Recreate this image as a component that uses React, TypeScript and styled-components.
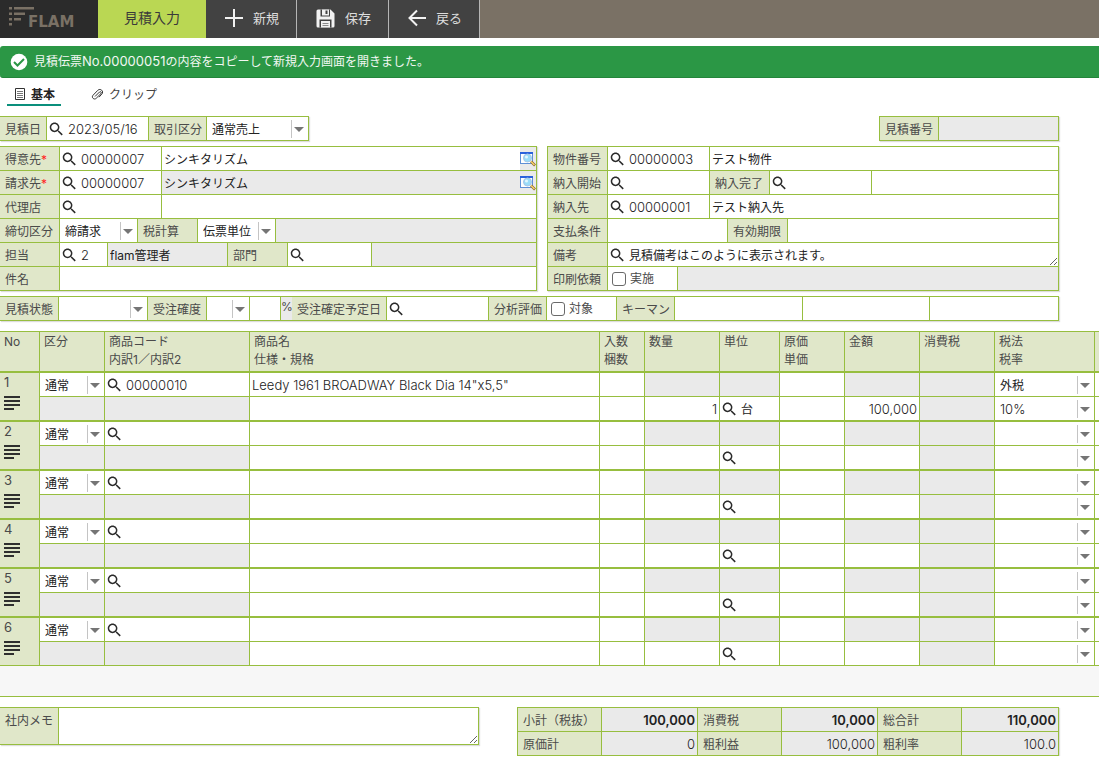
import React from "react";
import styled, { createGlobalStyle, css } from "styled-components";

const line = "#97be3f";
const labelBg = "#e0e7c9";
const readBg = "#eaeaea";
const latin = '"Inter", "Noto Sans CJK JP", sans-serif';

const Global = createGlobalStyle`
  *, *::before, *::after { box-sizing: border-box; }
  body {
    margin: 0;
    background: #fff;
    color: #4a4a4a;
    font-family: ${latin};
    font-size: 12px;
    font-weight: 400;
    line-height: 18px;
  }
  button, input, select, textarea { font: inherit; color: #222; margin: 0; border-radius: 0; }
`;

/* ---------- header ---------- */
const TopBar = styled.header`
  display: flex;
  height: 38px;
  background: #7a7165;
`;
const Logo = styled.a`
  display: flex;
  width: 98px;
  padding: 6px 0 0 8px;
  background: #2b2b2b;
  color: #7a7165;
  text-decoration: none;
`;
const LogoName = styled.span`
  margin: 7px 0 0 -8px;
  font: bold 15px/18px "DejaVu Sans", sans-serif;
`;
const CurrentPage = styled.h1`
  margin: 0;
  width: 108px;
  background: #bad753;
  color: #3a3a3a;
  font-size: 14px;
  font-weight: 400;
  line-height: 36px;
  text-align: center;
`;
const ToolButton = styled.button`
  display: flex;
  align-items: center;
  gap: 10px;
  padding: 0 17px 2px 19px;
  border: 0;
  border-right: 1px solid #b5b5b5;
  background: #424242;
  color: #ddd;
  font-size: 13px;
  cursor: pointer;
`;
const Notice = styled.div`
  display: flex;
  align-items: center;
  gap: 6px;
  height: 32px;
  margin-top: 8px;
  padding-left: 10px;
  border-bottom: 1px solid #24853b;
  border-radius: 3px 0 0 3px;
  background: #2b9745;
  color: #f2f8f3;
`;
const Num = styled.span`
  font-size: 13px;
`;

const Tabs = styled.nav`
  display: flex;
  gap: 23px;
  padding: 5px 0 0 7px;
`;
const Tab = styled.a<{ $active?: boolean }>`
  display: flex;
  align-items: center;
  gap: 5px;
  height: 23px;
  padding: 2px 6px 0 7px;
  border-bottom: 2px solid ${(p) => (p.$active ? "#0a8f7c" : "transparent")};
  color: ${(p) => (p.$active ? "#222" : "#444")};
  font-weight: ${(p) => (p.$active ? 700 : 400)};
  text-decoration: none;
`;

/* ---------- form ---------- */
const Form = styled.form`
  margin: 0;
`;
const Section = styled.div`
  display: flex;
  justify-content: space-between;
  margin-top: 5px;
  padding-right: 40px;
`;
const FirstSection = styled(Section)`
  margin-top: 10px;
`;
const Halves = styled(Section)`
  display: grid;
  grid-template-columns: 537fr 512fr;
  gap: 10px;
`;
const BottomSection = styled(Section)`
  display: grid;
  grid-template-columns: 479fr 542fr;
  align-items: start;
  gap: 38px;
  margin-top: 10px;
`;
const Panel = styled.div<{ $edge?: boolean; $grow?: boolean }>`
  min-width: 0;
  flex: ${(p) => (p.$grow ? 1 : "none")};
  border: 1px solid ${line};
  border-left-width: ${(p) => (p.$edge ? 0 : 1)}px;
  box-shadow: 1px 1px 1px #ddd;
`;
const Row = styled.div<{ $cols: string }>`
  display: grid;
  grid-template-columns: ${(p) => p.$cols};
  grid-template-rows: 23px;
  & + & {
    border-top: 1px solid ${line};
  }
  & > * + * {
    border-left: 1px solid ${line};
  }
`;
const Label = styled.label`
  padding: 1px 5px 0;
  background: ${labelBg};
  line-height: 23px;
  white-space: nowrap;
  overflow: hidden;
`;
const Required = styled.span`
  color: #f22;
`;
const Cell = styled.div<{ $read?: boolean }>`
  display: flex;
  align-items: center;
  min-width: 0;
  background: ${(p) => (p.$read ? readBg : "#fff")};
`;
const Input = styled.input<{ $num?: boolean; $right?: boolean; $strong?: boolean }>`
  flex: 1;
  width: 100%;
  min-width: 0;
  height: 23px;
  padding: 0 2px;
  border: 0;
  background: transparent;
  outline: 0;
  font-size: ${(p) => (p.$num ? 13 : 12)}px;
  font-weight: ${(p) => (p.$strong ? 600 : p.$num ? 300 : 400)};
  text-align: ${(p) => (p.$right ? "right" : "left")};
`;
const IconButton = styled.button`
  display: flex;
  flex: none;
  padding: 0 3px 0 2px;
  border: 0;
  background: transparent;
  cursor: pointer;
`;
const DetailButton = styled.button`
  display: flex;
  align-items: center;
  height: 23px;
  padding: 0;
  border: 0;
  background: ${readBg};
  cursor: pointer;
`;
const SelectBox = styled.div`
  position: relative;
  flex: 1;
  min-width: 0;
  &::before {
    content: "";
    position: absolute;
    top: 3px;
    right: 16px;
    height: 18px;
    border-left: 1px solid #c4c4c4;
  }
  &::after {
    content: "";
    position: absolute;
    top: 10px;
    right: 4px;
    border: 5px solid transparent;
    border-top-color: #757575;
    border-bottom: 0;
    pointer-events: none;
  }
`;
const SelectInput = styled.select<{ $num?: boolean }>`
  display: block;
  width: 100%;
  height: 23px;
  padding: ${(p) => (p.$num ? 1 : 2)}px 18px 0 5px;
  border: 0;
  background: transparent;
  appearance: none;
  outline: 0;
  font-size: ${(p) => (p.$num ? 13 : 12)}px;
  font-weight: ${(p) => (p.$num ? 300 : 400)};
`;
const Check = styled.label`
  display: flex;
  align-items: center;
  gap: 4px;
  padding: 1px 0 0 4px;
  background: #fff;
`;
const CheckBox = styled.input`
  appearance: none;
  width: 14px;
  height: 14px;
  border: 1px solid #6a6a6a;
  border-radius: 3px;
  background: #fff;
`;
const areaStyle = css`
  flex: 1;
  min-width: 0;
  border: 0;
  outline: 0;
  background: transparent;
  overflow: hidden;
  display: block;
`;
const Remarks = styled.textarea`
  ${areaStyle}
  height: 23px;
  padding: 4px 2px 0;
`;
const Memo = styled.textarea`
  ${areaStyle}
  height: 36px;
  padding: 2px;
`;
const MemoRow = styled.div`
  display: grid;
  grid-template-columns: 58px 1fr;
  & > * + * {
    border-left: 1px solid ${line};
  }
`;
const PercentGroup = styled.div`
  display: grid;
  grid-template-columns: 11px 1fr;
  grid-template-rows: 23px;
  background: ${readBg};
`;
const Percent = styled.span`
  line-height: 20px;
`;

/* ---------- detail lines ---------- */
const Lines = styled.div`
  margin-top: 10px;
  padding-bottom: 30px;
  border-bottom: 1px solid ${line};
  background: #f7f7f7;
  overflow: hidden;
`;
const LineTable = styled.table`
  width: 100%;
  table-layout: fixed;
  border-collapse: separate;
  border-spacing: 0;
  border-top: 1px solid ${line};
  background: #fff;
`;
const Col = styled.col<{ $w?: number }>`
  width: ${(p) => (p.$w ? `${p.$w}px` : "auto")};
`;
const Th = styled.th`
  height: 41px;
  padding: 1px 4px 0;
  border-right: 1px solid ${line};
  border-bottom: 2px solid ${line};
  background: ${labelBg};
  font-weight: 400;
  text-align: left;
  vertical-align: top;
  white-space: nowrap;
  &:last-child { border-right: 0; padding: 0; }
`;
const Td = styled.td<{ $read?: boolean; $end?: number }>`
  height: ${(p) => 23 + (p.$end ?? 1)}px;
  padding: 0;
  border-right: 1px solid ${line};
  border-bottom: ${(p) => p.$end ?? 1}px solid ${line};
  background: ${(p) => (p.$read ? readBg : "#fff")};
  &:last-child { border-right: 0; }
`;
const NoCell = styled.th<{ $end: number }>`
  padding: 0 4px;
  border-right: 1px solid ${line};
  border-bottom: ${(p) => p.$end}px solid ${line};
  background: ${labelBg};
  font-size: 13px;
  font-weight: 400;
  text-align: left;
  vertical-align: top;
`;
const MenuButton = styled.button`
  display: block;
  margin-top: 5px;
  padding: 0;
  border: 0;
  background: transparent;
`;

/* ---------- icons ---------- */
const SearchIcon = () => (
  <svg width="14" height="14" viewBox="2 2.400 18.800 18.800" fill="#2b2b2b">
    <path d="M15.5 14h-.79l-.28-.27C15.41 12.59 16 11.11 16 9.5 16 5.91 13.09 3 9.5 3S3 5.91 3 9.5 5.91 16 9.5 16c1.61 0 3.09-.59 4.23-1.57l.27.28v.79l5 4.99L20.49 19l-4.99-5zm-6 0C7.01 14 5 11.99 5 9.5S7.01 5 9.5 5 14 7.01 14 9.5 11.99 14 9.5 14z" />
  </svg>
);
const WindowIcon = () => (
  <svg width="16" height="16" viewBox="0 0 16 16">
    <rect x="0.5" y="1.5" width="12" height="11" fill="#fff" stroke="#5f8fd6" />
    <rect x="0" y="1" width="13" height="2" fill="#2a62dc" />
    <circle cx="7.5" cy="7" r="4" fill="#9adcf8" stroke="#a9c6e6" />
    <circle cx="6.5" cy="6" r="1.5" fill="#e4f8ff" />
    <path d="M11 10.500l4 4" stroke="#8d6a2c" strokeWidth="2.600" />
    <path d="M11 10.500l3.500 3.500" stroke="#f6cf6c" strokeWidth="1.500" />
  </svg>
);
const LinesIcon = () => (
  <svg width="16" height="14" viewBox="0 0 16 14" fill="#2f2f2f">
    <path d="M0 0h16v2H0zM0 4h16v2H0zM0 8h16v2H0zM0 12h10v2H0z" />
  </svg>
);
const PlusIcon = () => (
  <svg width="18" height="18" viewBox="0 0 18 18" fill="#f2f2f2">
    <path d="M8 0h2v8h8v2h-8v8H8v-8H0V8h8z" />
  </svg>
);
const SaveIcon = () => (
  <svg width="19" height="19" viewBox="0 0 19 19">
    <path d="M2 .5h12.500l4 4V17a1.500 1.500 0 0 1-1.500 1.500H2A1.500 1.500 0 0 1 .5 17V2A1.500 1.500 0 0 1 2 .5z" fill="#f2f2f2" />
    <path d="M4.500 .5h9.500V7.500H4.500zM3.500 10.500h12v8h-12z" fill="#424242" />
    <path d="M6 .5h7V6.500H6zM5 12h9v6.500H5z" fill="#f2f2f2" />
    <path d="M9.500 1.500h2V5h-2z" fill="#424242" />
    <path d="M6.500 14h6v1h-6zM6.500 16h6v1h-6z" fill="#8a8a8a" />
  </svg>
);
const BackIcon = () => (
  <svg width="18" height="18" viewBox="0 0 18 18" fill="none" stroke="#f2f2f2" strokeWidth="2">
    <path d="M18 9H1.500M9 1.500L1.500 9 9 16.500" />
  </svg>
);
const OkIcon = () => (
  <svg width="18" height="18" viewBox="0 0 18 18">
    <circle cx="9" cy="9" r="8.300" fill="#fff" />
    <path d="M4 9l3.500 3.500 6.500-6.500" fill="none" stroke="#2b9745" strokeWidth="2" />
  </svg>
);
const DocIcon = () => (
  <svg width="12" height="13" viewBox="0 0 12 13" fill="none" stroke="#333">
    <path d="M1.500 .5h9v11h-9z" />
    <path d="M3 3.500h6M3 5.500h6M3 7.500h6M3 9.500h6" stroke="#777" />
  </svg>
);
const ClipIcon = () => (
  <svg width="13" height="13" viewBox="0 0 13 13" fill="none" stroke="#333">
    <path d="M4 8.500l4.500-4.500c1-1 2.500.4 1.500 1.500L5.200 10.300c-2 2-5.200-.8-3.200-3L6.800 2.300c2.500-2.500 6.500 1 4 3.800L8 9.200" />
  </svg>
);
const LogoMark = () => (
  <svg width="28" height="20" viewBox="0 0 28 20" fill="#7a7165">
    <path d="M1 1h3v2.500H1zM6 1h20v2.500H6zM1 6.500h3V9H1zM6 6.500h11V9H6zM1 12h3v2.500H1zM6 12h7v2.500H6zM1 17h3v2.500H1z" />
  </svg>
);

/* ---------- building blocks ---------- */
type LookupProps = { id?: string; name?: string; value?: string; num?: boolean };
const Lookup = ({ id, name, value = "", num = true }: LookupProps) => (
  <Cell>
    <IconButton type="button" aria-label="検索"><SearchIcon /></IconButton>
    <Input id={id} aria-label={name} $num={num} defaultValue={value} />
  </Cell>
);
const Text = ({ id, name, value = "", read }: { id?: string; name?: string; value?: string; read?: boolean }) => (
  <Cell $read={read}><Input id={id} aria-label={name} readOnly={read} defaultValue={value} /></Cell>
);
const Select = ({ id, name, value = "", num }: { id?: string; name?: string; value?: string; num?: boolean }) => (
  <Cell>
    <SelectBox>
      <SelectInput id={id} aria-label={name} $num={num} defaultValue={value}>
        <option>{value}</option>
      </SelectInput>
    </SelectBox>
  </Cell>
);
const Company = ({ name, read }: { name: string; read?: boolean }) => (
  <Cell $read={read}>
    <Input aria-label={name} readOnly={read} defaultValue="シンキタリズム" />
    <DetailButton type="button" aria-label="詳細"><WindowIcon /></DetailButton>
  </Cell>
);
const Total = ({ id, value, strong }: { id: string; value: string; strong?: boolean }) => (
  <Cell $read><Input id={id} readOnly $num $right $strong={strong} defaultValue={value} /></Cell>
);

const widths = [40, 65, 145, 0, 45, 75, 60, 65, 75, 75, 100, 4];
const totalCols = "83px 96fr 84px 96fr 84px 97fr";

type Item = { code: string; name: string; qty: string; unit: string; amount: string; tax: string; rate: string };
const blank: Item = { code: "", name: "", qty: "", unit: "", amount: "", tax: "", rate: "" };
const items: Item[] = [
  { code: "00000010", name: 'Leedy 1961 BROADWAY Black Dia 14"x5,5"', qty: "1", unit: "台", amount: "100,000", tax: "外税", rate: "10%" },
  blank, blank, blank, blank, blank,
];

const ItemRows = ({ item, no, end }: { item: Item; no: number; end: number }) => (
  <>
    <tr>
      <NoCell rowSpan={2} $end={end}>
        {no}
        <MenuButton type="button" aria-label="行メニュー"><LinesIcon /></MenuButton>
      </NoCell>
      <Td><Select name="区分" value="通常" /></Td>
      <Td><Lookup name="商品コード" value={item.code} /></Td>
      <Td><Input aria-label="商品名" $num defaultValue={item.name} /></Td>
      <Td><Input aria-label="入数" /></Td>
      <Td $read />
      <Td $read />
      <Td><Input aria-label="原価" /></Td>
      <Td $read />
      <Td $read />
      <Td><Select name="税法" value={item.tax} /></Td>
      <Td />
    </tr>
    <tr>
      <Td $read $end={end} />
      <Td $read $end={end} />
      <Td $end={end}><Input aria-label="仕様・規格" /></Td>
      <Td $end={end}><Input aria-label="梱数" /></Td>
      <Td $end={end}><Input aria-label="数量" $num $right defaultValue={item.qty} /></Td>
      <Td $end={end}><Lookup name="単位" num={false} value={item.unit} /></Td>
      <Td $end={end}><Input aria-label="単価" /></Td>
      <Td $end={end}><Input aria-label="金額" $num $right defaultValue={item.amount} /></Td>
      <Td $read $end={end} />
      <Td $end={end}><Select name="税率" num value={item.rate} /></Td>
      <Td $end={end} />
    </tr>
  </>
);

export default function App() {
  return (
    <>
      <Global />
      <TopBar>
        <Logo href="#">
          <LogoMark />
          <LogoName>FLAM</LogoName>
        </Logo>
        <CurrentPage>見積入力</CurrentPage>
        <ToolButton type="button"><PlusIcon />新規</ToolButton>
        <ToolButton type="button"><SaveIcon />保存</ToolButton>
        <ToolButton type="button"><BackIcon />戻る</ToolButton>
      </TopBar>
      <Notice role="status">
        <OkIcon />
        <span>見積伝票<Num>No.00000051</Num>の内容をコピーして新規入力画面を開きました。</span>
      </Notice>
      <Tabs>
        <Tab href="#basic" $active><DocIcon />基本</Tab>
        <Tab href="#clip"><ClipIcon />クリップ</Tab>
      </Tabs>

      <Form>
        <FirstSection>
          <Panel $edge>
            <Row $cols="46px 102px 58px 102px">
              <Label htmlFor="date">見積日</Label>
              <Lookup id="date" value="2023/05/16" />
              <Label htmlFor="deal">取引区分</Label>
              <Select id="deal" value="通常売上" />
            </Row>
          </Panel>
          <Panel>
            <Row $cols="58px 120px">
              <Label htmlFor="quote-no">見積番号</Label>
              <Text id="quote-no" read />
            </Row>
          </Panel>
        </FirstSection>

        <Halves>
          <Panel $edge>
            <Row $cols="59px 102px 1fr">
              <Label htmlFor="customer">得意先<Required>*</Required></Label>
              <Lookup id="customer" value="00000007" />
              <Company name="得意先名" />
            </Row>
            <Row $cols="59px 102px 1fr">
              <Label htmlFor="billing">請求先<Required>*</Required></Label>
              <Lookup id="billing" value="00000007" />
              <Company name="請求先名" read />
            </Row>
            <Row $cols="59px 102px 1fr">
              <Label htmlFor="agency">代理店</Label>
              <Lookup id="agency" />
              <Text name="代理店名" />
            </Row>
            <Row $cols="59px 78px 60px 78px 1fr">
              <Label htmlFor="closing">締切区分</Label>
              <Select id="closing" value="締請求" />
              <Label htmlFor="tax-calc">税計算</Label>
              <Select id="tax-calc" value="伝票単位" />
              <Cell $read />
            </Row>
            <Row $cols="59px 48px 120px 60px 84px 1fr">
              <Label htmlFor="staff">担当</Label>
              <Lookup id="staff" value="2" />
              <Text name="担当者名" read value="flam管理者" />
              <Label htmlFor="dept">部門</Label>
              <Lookup id="dept" />
              <Cell $read />
            </Row>
            <Row $cols="59px 1fr">
              <Label htmlFor="subject">件名</Label>
              <Text id="subject" />
            </Row>
          </Panel>

          <Panel>
            <Row $cols="59px 102px 1fr">
              <Label htmlFor="project">物件番号</Label>
              <Lookup id="project" value="00000003" />
              <Text name="物件名" value="テスト物件" />
            </Row>
            <Row $cols="59px 102px 60px 102px 1fr">
              <Label htmlFor="start">納入開始</Label>
              <Lookup id="start" />
              <Label htmlFor="finish">納入完了</Label>
              <Lookup id="finish" />
              <Text name="納期備考" />
            </Row>
            <Row $cols="59px 102px 1fr">
              <Label htmlFor="deliver">納入先</Label>
              <Lookup id="deliver" value="00000001" />
              <Text name="納入先名" value="テスト納入先" />
            </Row>
            <Row $cols="59px 120px 60px 1fr">
              <Label htmlFor="payment">支払条件</Label>
              <Text id="payment" />
              <Label htmlFor="expiry">有効期限</Label>
              <Text id="expiry" />
            </Row>
            <Row $cols="59px 1fr">
              <Label htmlFor="remarks">備考</Label>
              <Cell>
                <IconButton type="button" aria-label="検索"><SearchIcon /></IconButton>
                <Remarks id="remarks" rows={1} defaultValue="見積備考はこのように表示されます。" />
              </Cell>
            </Row>
            <Row $cols="59px 70px 1fr">
              <Label htmlFor="print">印刷依頼</Label>
              <Check><CheckBox id="print" type="checkbox" />実施</Check>
              <Cell $read />
            </Row>
          </Panel>
        </Halves>

        <Section>
          <Panel $edge $grow>
            <Row $cols="58px 89px 59px 43px 31px 106px 102px 58px 70px 58px 128fr 127fr 129fr">
              <Label htmlFor="state">見積状態</Label>
              <Select id="state" />
              <Label htmlFor="rank">受注確度</Label>
              <Select id="rank" />
              <Text name="受注確度（％）" />
              <PercentGroup>
                <Percent>%</Percent>
                <Label htmlFor="order-date">受注確定予定日</Label>
              </PercentGroup>
              <Lookup id="order-date" />
              <Label htmlFor="analysis">分析評価</Label>
              <Check><CheckBox id="analysis" type="checkbox" />対象</Check>
              <Label htmlFor="keyman">キーマン</Label>
              <Text id="keyman" />
              <Text name="キーマン2" />
              <Text name="キーマン3" />
            </Row>
          </Panel>
        </Section>

        <Lines>
          <LineTable>
            <colgroup>{widths.map((w, i) => <Col key={i} $w={w} />)}</colgroup>
            <thead>
              <tr>
                <Th>No</Th>
                <Th>区分</Th>
                <Th>商品コード<br />内訳1／内訳2</Th>
                <Th>商品名<br />仕様・規格</Th>
                <Th>入数<br />梱数</Th>
                <Th>数量</Th>
                <Th>単位</Th>
                <Th>原価<br />単価</Th>
                <Th>金額</Th>
                <Th>消費税</Th>
                <Th>税法<br />税率</Th>
                <Th />
              </tr>
            </thead>
            <tbody>
              {items.map((item, i) => (
                <ItemRows key={i} item={item} no={i + 1} end={i === items.length - 1 ? 1 : 2} />
              ))}
            </tbody>
          </LineTable>
        </Lines>

        <BottomSection>
          <Panel $edge>
            <MemoRow>
              <Label htmlFor="memo">社内メモ</Label>
              <Memo id="memo" />
            </MemoRow>
          </Panel>
          <Panel>
            <Row $cols={totalCols}>
              <Label htmlFor="subtotal">小計（税抜）</Label>
              <Total id="subtotal" value="100,000" strong />
              <Label htmlFor="tax">消費税</Label>
              <Total id="tax" value="10,000" strong />
              <Label htmlFor="total">総合計</Label>
              <Total id="total" value="110,000" strong />
            </Row>
            <Row $cols={totalCols}>
              <Label htmlFor="cost">原価計</Label>
              <Total id="cost" value="0" />
              <Label htmlFor="profit">粗利益</Label>
              <Total id="profit" value="100,000" />
              <Label htmlFor="margin">粗利率</Label>
              <Total id="margin" value="100.0" />
            </Row>
          </Panel>
        </BottomSection>
      </Form>
    </>
  );
}
